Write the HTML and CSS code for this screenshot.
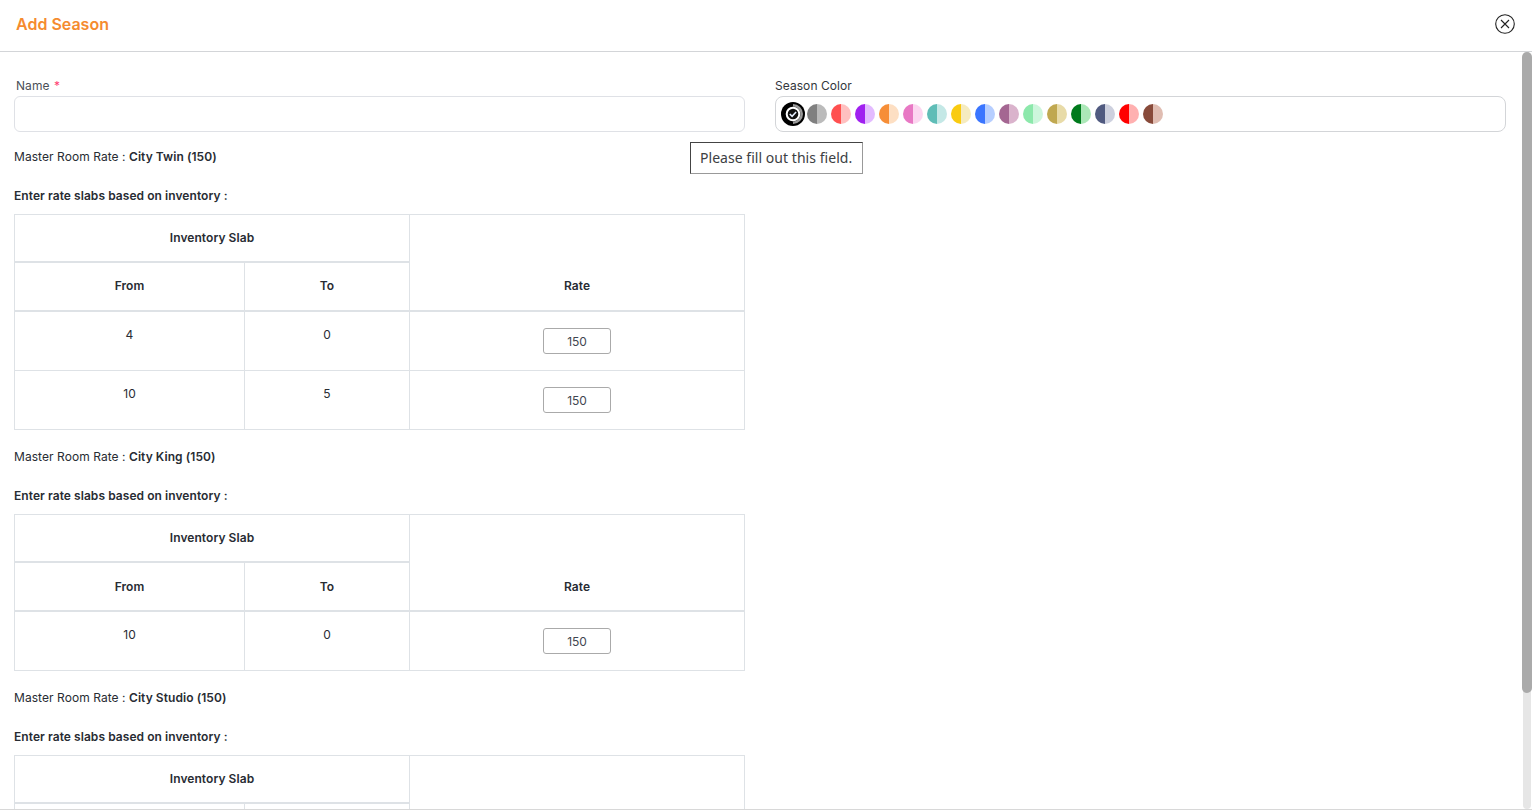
FILE: index.html
```html
<!DOCTYPE html>
<html lang="en">
<head>
    <meta charset="UTF-8">
    <meta name="viewport" content="width=device-width, initial-scale=1.0">
    <title>Add Season</title>
    <link rel="stylesheet" href="styles.css">
</head>
<body>

    <div class="modal">
        <div class="modal-header">
            <h2>Add Season</h2>
            <button class="close-btn" type="button" aria-label="Close">
                <svg width="20" height="20" viewBox="0 0 20 20" fill="none" stroke="#222" stroke-width="1.1">
                    <circle cx="10" cy="10" r="9.3"/>
                    <path d="M6 6l8 8M14 6l-8 8"/>
                </svg>
            </button>
        </div>

        <div class="modal-main">
            <div class="modal-body">
                <div class="form-row">
                    <div class="field">
                        <label>Name <span class="req">*</span></label>
                        <input class="text-input" type="text">
                    </div>
                    <div class="field field-color">
                        <label>Season Color</label>
                        <div class="color-box">
                            <svg class="swatch-selected" width="24" height="24" viewBox="0 0 24 24" fill="none">
                                <circle cx="12" cy="12" r="12" fill="#000"/>
                                <path d="M12 2a10 10 0 0 1 0 20z" fill="#9a9a9a"/>
                                <circle cx="12" cy="12" r="7.5" fill="#111"/>
                                <circle cx="12" cy="12" r="6.3" stroke="#fff" stroke-width="2"/>
                                <path d="M8.8 12l2.3 2.3 4-4.3" stroke="#e8f0ff" stroke-width="1.6"/>
                            </svg>
                            <span class="swatch c-gray"></span>
                            <span class="swatch c-red"></span>
                            <span class="swatch c-purple"></span>
                            <span class="swatch c-orange"></span>
                            <span class="swatch c-pink"></span>
                            <span class="swatch c-teal"></span>
                            <span class="swatch c-yellow"></span>
                            <span class="swatch c-blue"></span>
                            <span class="swatch c-plum"></span>
                            <span class="swatch c-mint"></span>
                            <span class="swatch c-olive"></span>
                            <span class="swatch c-green"></span>
                            <span class="swatch c-navy"></span>
                            <span class="swatch c-pure"></span>
                            <span class="swatch c-brown"></span>
                        </div>
                    </div>
                </div>

                <div class="tooltip">Please fill out this field.</div>

                <p class="master">Master Room Rate : <b>City Twin (150)</b></p>
                <p class="enter">Enter rate slabs based on inventory :</p>
                <table class="slabs slabs-high-head">
                    <colgroup>
                        <col class="col-from">
                        <col class="col-to">
                        <col>
                    </colgroup>
                    <thead>
                        <tr class="row-top">
                            <th colspan="2">Inventory Slab</th>
                            <th class="no-bottom"></th>
                        </tr>
                        <tr class="row-head">
                            <th>From</th>
                            <th>To</th>
                            <th class="no-top">Rate</th>
                        </tr>
                    </thead>
                    <tbody>
                        <tr>
                            <td>4</td>
                            <td>0</td>
                            <td class="rate-cell"><input class="rate-input" type="text" value="150"></td>
                        </tr>
                        <tr>
                            <td>10</td>
                            <td>5</td>
                            <td class="rate-cell"><input class="rate-input" type="text" value="150"></td>
                        </tr>
                    </tbody>
                </table>

                <p class="master">Master Room Rate : <b>City King (150)</b></p>
                <p class="enter">Enter rate slabs based on inventory :</p>
                <table class="slabs">
                    <colgroup>
                        <col class="col-from">
                        <col class="col-to">
                        <col>
                    </colgroup>
                    <thead>
                        <tr class="row-top">
                            <th colspan="2">Inventory Slab</th>
                            <th class="no-bottom"></th>
                        </tr>
                        <tr class="row-head">
                            <th>From</th>
                            <th>To</th>
                            <th class="no-top">Rate</th>
                        </tr>
                    </thead>
                    <tbody>
                        <tr>
                            <td>10</td>
                            <td>0</td>
                            <td class="rate-cell"><input class="rate-input" type="text" value="150"></td>
                        </tr>
                    </tbody>
                </table>

                <p class="master">Master Room Rate : <b>City Studio (150)</b></p>
                <p class="enter">Enter rate slabs based on inventory :</p>
                <table class="slabs">
                    <colgroup>
                        <col class="col-from">
                        <col class="col-to">
                        <col>
                    </colgroup>
                    <thead>
                        <tr class="row-top">
                            <th colspan="2">Inventory Slab</th>
                            <th class="no-bottom"></th>
                        </tr>
                        <tr class="row-head">
                            <th>From</th>
                            <th>To</th>
                            <th class="no-top">Rate</th>
                        </tr>
                    </thead>
                    <tbody>
                        <tr>
                            <td>10</td>
                            <td>0</td>
                            <td class="rate-cell"><input class="rate-input" type="text" value="150"></td>
                        </tr>
                    </tbody>
                </table>
            </div>

            <div class="scrollbar">
                <div class="scrollbar-thumb"></div>
            </div>
        </div>
    </div>

</body>
</html>
```

FILE: styles.css
```css
html, body{
    margin: 0;
    height: 100%;
    overflow: hidden;
    background-color: #fff;
}

body{
    font-family: Inter, "Liberation Sans", sans-serif;
    font-size: 12px;
    letter-spacing: 0.06px;
    color: #282c33;
}

.modal{
    height: 810px;
    box-sizing: border-box;
    border-bottom: 1px solid #d8d8d8;
    display: flex;
    flex-direction: column;
}

.modal-header{
    height: 48px;
    flex: none;
    border-bottom: 1px solid #d3d5d8;
    display: flex;
    align-items: center;
    justify-content: space-between;
    padding: 0 17px 3px 16px;
}

.modal-header h2{
    margin: 0;
    font-size: 16px;
    font-weight: 600;
    letter-spacing: 0;
    color: #f58b2f;
}

.close-btn{
    border: 0;
    background: none;
    padding: 0;
    width: 20px;
    height: 20px;
    display: flex;
}

.modal-main{
    flex: 1;
    min-height: 0;
    display: flex;
}

.modal-body{
    flex: 1;
    min-width: 0;
    overflow: hidden;
    position: relative;
    padding: 26px 16px 0 14px;
}

.scrollbar{
    width: 8px;
    flex: none;
    margin: 0 1px;
    background-color: #e6e6e6;
    border-radius: 4px;
}

.scrollbar-thumb{
    width: 10px;
    height: 641px;
    margin-left: -1px;
    background-color: #aaa;
    border-radius: 5px;
}

.form-row{
    display: flex;
    gap: 30px;
}

.field{
    flex: 1;
}

.field label{
    display: block;
    line-height: 15px;
    margin: 0 0 3px 2px;
    color: #4b5058;
}

.field-color label{
    margin-left: 0;
    color: #33373d;
}

.req{
    margin-left: 1px;
    color: #ff3d71;
}

.text-input{
    display: block;
    width: 100%;
    height: 36px;
    box-sizing: border-box;
    border: 1px solid #dfe1e6;
    border-radius: 6px;
}

.color-box{
    height: 36px;
    box-sizing: border-box;
    border: 1px solid #d3d5d8;
    border-radius: 8px;
    display: flex;
    align-items: center;
    padding-left: 5px;
}

.swatch{
    width: 20px;
    height: 20px;
    border-radius: 50%;
    margin: 0 2px;
}

.c-gray{ background: linear-gradient(90deg, #808080 50%, #bbbbbb 50%); }
.c-red{ background: linear-gradient(90deg, #ff5050 50%, #ffc0c0 50%); }
.c-purple{ background: linear-gradient(90deg, #a020f0 50%, #e3bbff 50%); }
.c-orange{ background: linear-gradient(90deg, #f68e37 50%, #fddfc3 50%); }
.c-pink{ background: linear-gradient(90deg, #e878c4 50%, #fcd6f0 50%); }
.c-teal{ background: linear-gradient(90deg, #5fbdb7 50%, #c4e8e6 50%); }
.c-yellow{ background: linear-gradient(90deg, #f9cb10 50%, #f5ebbf 50%); }
.c-blue{ background: linear-gradient(90deg, #3a75ff 50%, #b6ceff 50%); }
.c-plum{ background: linear-gradient(90deg, #a46692 50%, #dab3cc 50%); }
.c-mint{ background: linear-gradient(90deg, #8ce8ab 50%, #cdf6dc 50%); }
.c-olive{ background: linear-gradient(90deg, #c0a850 50%, #e8dba8 50%); }
.c-green{ background: linear-gradient(90deg, #007a1c 50%, #ace8b8 50%); }
.c-navy{ background: linear-gradient(90deg, #505a80 50%, #cdd0de 50%); }
.c-pure{ background: linear-gradient(90deg, #ff0000 50%, #ffb0b0 50%); }
.c-brown{ background: linear-gradient(90deg, #884a3a 50%, #e0bdb2 50%); }

.tooltip{
    position: absolute;
    left: 690px;
    top: 90px;
    width: 173px;
    height: 32px;
    box-sizing: border-box;
    padding-left: 9px;
    background-color: #fff;
    border: 1px solid;
    border-color: #444 #999 #999 #444;
    font-family: "Noto Sans", sans-serif;
    font-size: 14px;
    letter-spacing: 0.04px;
    line-height: 30px;
    color: #3c4043;
    white-space: nowrap;
}

.master{
    margin: 0;
    padding-top: 17px;
    line-height: 15px;
}

.master b, .enter{
    font-weight: 600;
}

.enter{
    margin: 0;
    padding: 24px 0 11px;
    line-height: 15px;
}

.slabs{
    width: 731px;
    border-collapse: collapse;
    table-layout: fixed;
    margin-bottom: 2px;
}

.slabs th, .slabs td{
    border: 1px solid #dee2e6;
    text-align: center;
    padding: 0;
    box-sizing: border-box;
}

.slabs th{
    font-weight: 600;
    border-bottom-width: 2px;
}

.row-top th{
    height: 47px;
}

.row-head th{
    height: 49px;
}

.slabs-high-head .row-head th{
    padding-bottom: 2px;
}

.col-from{
    width: 230px;
}

.col-to{
    width: 165px;
}

.slabs .no-bottom{
    border-bottom: 0;
}

.slabs .no-top{
    border-top: 0;
    padding-top: 2px;
}

.slabs td{
    height: 59px;
    vertical-align: top;
    padding-top: 15px;
    line-height: 15px;
}

.slabs tbody tr:first-child td{
    height: 60px;
}

.slabs .rate-cell{
    padding-top: 16px;
}

.rate-input{
    display: block;
    margin: 0 auto;
    width: 68px;
    height: 26px;
    box-sizing: border-box;
    border: 1px solid #aaa;
    border-radius: 3px;
    text-align: center;
    font-family: inherit;
    font-size: 12px;
    color: #3f4650;
    padding: 1px 0 0;
}
```
